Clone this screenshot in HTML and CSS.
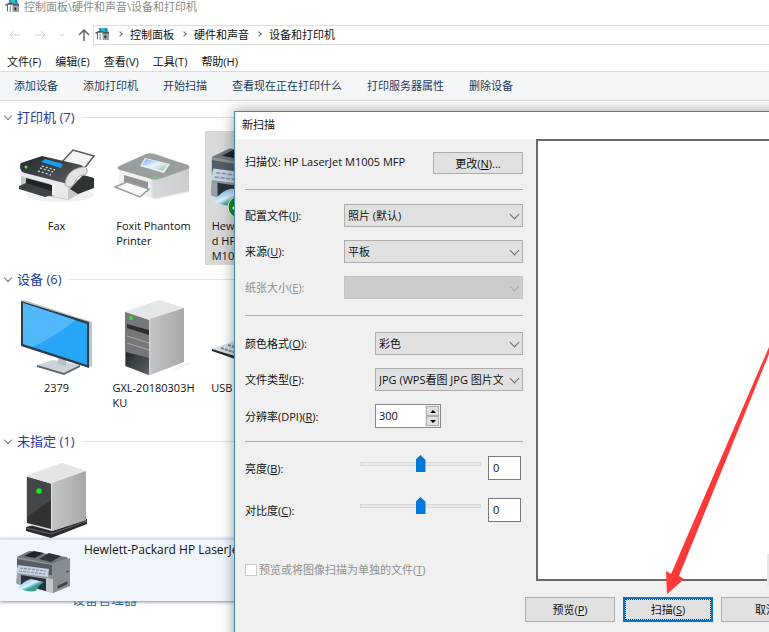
FILE: index.html
```html
<!DOCTYPE html>
<html lang="zh-CN">

<head>
    <meta charset="UTF-8">
    <meta name="viewport" content="width=device-width, initial-scale=1.0">
    <title>设备和打印机</title>
    <link rel="stylesheet" href="styles.css">
</head>

<body>
    <!-- shared drawings -->
    <svg class="defs" width="0" height="0">
        <defs>
            <linearGradient id="dark" x1="0" y1="0" x2="1" y2="1">
                <stop offset="0" stop-color="#24282b" />
                <stop offset="1" stop-color="#5c6267" />
            </linearGradient>
            <linearGradient id="side" x1="0" y1="0" x2="1" y2="0">
                <stop offset="0" stop-color="#c2c4c5" />
                <stop offset="1" stop-color="#a6a8aa" />
            </linearGradient>
            <linearGradient id="photo" x1="0" y1="0" x2="1" y2="1">
                <stop offset="0" stop-color="#3f9be8" />
                <stop offset="0.45" stop-color="#dff3ff" />
                <stop offset="0.6" stop-color="#3aa3a0" />
                <stop offset="1" stop-color="#4d9a4b" />
            </linearGradient>
            <linearGradient id="shot" x1="0" y1="0" x2="1" y2="1">
                <stop offset="0" stop-color="#6fa8e6" />
                <stop offset="0.5" stop-color="#eef6fb" />
                <stop offset="1" stop-color="#9ab8a4" />
            </linearGradient>
            <symbol id="small-device" viewBox="0 0 16 14">
                <path d="M4 0h9l1 4H5z" fill="#1583dc" />
                <path d="M6 0h4l1 3H7z" fill="#35d08a" />
                <path d="M0 5l4-2h4v2H3v7H2V6H0z" fill="#4b565f" />
                <path d="M5 6h1v7H5z" fill="#69737b" />
                <path d="M8 5h7v8H8z" fill="#9aa3a9" />
                <path d="M8 4h7v2H8z" fill="#4d565e" />
                <path d="M10 8h2v3h-2z" fill="#2b3339" />
            </symbol>
            <symbol id="laser" viewBox="0 0 56 44">
                <path d="M2 7l12-6 38 6 3 5v24l-17 7-36-9z" fill="#8d949a" />
                <path d="M2 7l13-6 38 7-16 6z" fill="#70777d" />
                <path d="M9 6l10-5 10 2-9 5z" fill="#202528" />
                <path d="M24 9l10-6 12 3-10 6z" fill="#2e3438" />
                <path d="M2 9l35 6v10L2 22z" fill="#555c62" />
                <path d="M37 15l18-7v27l-17 8z" fill="#868e94" />
                <path d="M3 15l31 4-1 8L1 23z" fill="#c6d3e1" />
                <path d="M5 18l26 3M4 21l26 3" stroke="#8497aa" stroke-width="1.2" stroke-dasharray="3 1" />
                <path d="M2 24l4 1v10l-5-2z" fill="#9aa1a6" />
                <path d="M6 25l25 4v12L6 34z" fill="#2b3136" />
                <path d="M3 38c4-5 8-8 13-9l13 3c-5 3-7 6-8 9-6 1-12 0-18-3z" fill="url(#photo)" />
                <path d="M31 28l7 1v14l-7-2z" fill="#c3c7ca" />
                <path d="M43 36l9-4v2l-9 4zM51 22l3-1" fill="#3d4348" stroke="#3d4348" />
            </symbol>
        </defs>
    </svg>

    <main class="explorer">
        <header class="caption">
            <svg class="small-icon"><use href="#small-device" /></svg>
            <span>控制面板\硬件和声音\设备和打印机</span>
        </header>

        <nav class="address">
            <div class="history">
                <svg width="12" height="10" viewBox="0 0 12 10"><path d="M11 5H1M5 1L1 5l4 4" stroke="#d0d0d0" fill="none" /></svg>
                <svg width="12" height="10" viewBox="0 0 12 10"><path d="M1 5h10M7 1l4 4-4 4" stroke="#d0d0d0" fill="none" /></svg>
                <svg width="6" height="4" viewBox="0 0 6 4"><path d="M1 1l2 2 2-2" stroke="#d0d0d0" fill="none" /></svg>
                <svg width="12" height="12" viewBox="0 0 12 12"><path d="M6 12V1M1 6l5-5 5 5" stroke="#666" stroke-width="1.5" fill="none" /></svg>
            </div>
            <div class="crumbs">
                <svg class="small-icon"><use href="#small-device" /></svg>
                <i class="crumb-sep"></i>
                <span>控制面板</span>
                <i class="crumb-sep"></i>
                <span>硬件和声音</span>
                <i class="crumb-sep"></i>
                <span>设备和打印机</span>
            </div>
        </nav>

        <nav class="menu">
            <span>文件(F)</span>
            <span>编辑(E)</span>
            <span>查看(V)</span>
            <span>工具(T)</span>
            <span>帮助(H)</span>
        </nav>

        <div class="toolbar">
            <button type="button">添加设备</button>
            <button type="button">添加打印机</button>
            <button type="button">开始扫描</button>
            <button type="button">查看现在正在打印什么</button>
            <button type="button">打印服务器属性</button>
            <button type="button">删除设备</button>
        </div>

        <section class="group">
            <h2><i class="fold"></i>打印机 (7)</h2>
            <div class="tiles">
                <div class="tile">
                    <svg class="device" viewBox="1 1 80 80">
                        <ellipse cx="44" cy="58" rx="34" ry="7" fill="#f1f1f1" />
                        <path d="M45 26l12-13 21 6-13 17z" fill="#f4f4f4" stroke="#555b60" stroke-width="1.5" />
                        <path d="M5 31l29 8v18l18 5V47l15-7v15l-15 8-17-3-30-8z" fill="#c5c8ca" />
                        <path d="M5 26l21-7 39 9c3 1 3 4 1 6L52 46c-4 2-8 1-13 0L8 36c-4-2-5-7-3-10z" fill="url(#dark)" />
                        <path d="M5 35l47 12v15l-13-2V48L5 39z" fill="#e8e9ea" />
                        <path d="M10 41l26 7v11l-26-6z" fill="#1f2427" />
                        <path d="M3 49l7-3 26 8v4l-7 2L3 52z" fill="#3c4246" />
                        <path d="M67 38l11 3v10l-16 6-8-5z" fill="#2e3336" />
                        <path d="M49 47c1-10 8-16 19-17 4 0 4 6 1 8-6 0-9 3-11 9-2 4-9 3-9 0z" fill="#e0e2e3" stroke="#aaa" />
                        <path d="M25 25l4-3 18 5-2 4z" fill="#189df0" />
                        <path d="M26 29l13 4m-15-2l13 4m-15-1l13 4" stroke="#c6cbcf" stroke-width="1.4" stroke-dasharray="2 2" />
                        <circle cx="10" cy="30" r="1.5" fill="#40ef4a" />
                    </svg>
                    <span class="name">Fax</span>
                </div>
                <div class="tile">
                    <svg class="device" viewBox="3 1 80 80">
                        <path d="M8 31l35-15 35 13v26L45 62 9 50z" fill="#e1e2e3" />
                        <path d="M8 29l27-12c3-1 5-1 8 0l34 11c2 1 2 3 0 4L49 42c-3 1-6 1-9 0L9 33c-3-1-3-3-1-4z" fill="#9b9e9f" />
                        <path d="M8 33l32 9v19l-6-2V48L13 42v7l-5 2z" fill="#f0f1f1" />
                        <path d="M13 38l24 7v10l-24-5z" fill="#909496" />
                        <path d="M4 50l12-5 22 7-9 8z" fill="#fafafa" stroke="#9b9e9f" stroke-width="1.5" />
                        <path d="M41 43l37-12v23L42 61z" fill="url(#side)" opacity=".35" />
                        <path d="M34 21l25 6-6 9-24-7z" fill="#e9f2f7" />
                        <path d="M35 22l22 5-5 7-21-6z" fill="url(#shot)" />
                        <circle cx="44" cy="40" r="1.2" fill="#4ce457" />
                    </svg>
                    <span class="name">Foxit Phantom<br>Printer</span>
                </div>
                <div class="tile selected">
                    <svg class="device" viewBox="0 0 80 80">
                        <use href="#laser" x="-2" y="9" width="80" height="63" />
                        <circle cx="28" cy="69" r="11" fill="#109310" stroke="#fff" />
                        <path d="M22 69l4 4 8-9" fill="none" stroke="#fff" stroke-width="3" />
                    </svg>
                    <span class="name">Hewlett-Packar<br>d HP LaserJet<br>M1005</span>
                </div>
            </div>
        </section>

        <section class="group">
            <h2><i class="fold"></i>设备 (6)</h2>
            <div class="tiles">
                <div class="tile">
                    <svg class="device" viewBox="1 0 80 80">
                        <path d="M21 65l16-5 27 5-16 9z" fill="#cad4da" />
                        <path d="M21 65l27 8 16-8v2l-16 8-27-8z" fill="#59636a" />
                        <path d="M42 57l8 2v7l-8-2z" fill="#b9c2c9" />
                        <path d="M5 1l3-1 68 22v44l-4 2z" fill="#bac4cc" />
                        <path d="M5 1l68 21v46L5 46z" fill="#2e3c46" />
                        <path d="M7 3l64 21v41L7 44z" fill="#27a6f8" />
                        <path d="M7 3l52 17c-12 11-26 19-42 27L7 44z" fill="#50b8fb" />
                    </svg>
                    <span class="name">2379</span>
                </div>
                <div class="tile">
                    <svg class="device" viewBox="1 0 80 80">
                        <path d="M66 65l9-3 6 1-24 9z" fill="#f4f4f4" />
                        <path d="M12 12L46 0l25 8v54L37 75l-25-9z" fill="#d8dadb" />
                        <path d="M12 12L46 0l25 8-35 12z" fill="#e4e6e8" />
                        <path d="M37 19l34-11v54L37 75z" fill="url(#side)" />
                        <path d="M12 12l24 8v55l-24-9z" fill="#77777b" />
                        <path d="M14 24l22 6v5l-22-7z" fill="#2e2f31" />
                        <path d="M14 36l22 7m-22 0l22 7" stroke="#aaa" />
                        <path d="M13 52l23 6v17l-23-9z" fill="url(#dark)" />
                        <circle cx="18" cy="18" r="2" fill="#35e332" />
                    </svg>
                    <span class="name">GXL-20180303H<br>KU</span>
                </div>
                <div class="tile">
                    <svg class="device" viewBox="0 0 80 80">
                        <path d="M1 49l22-8 44 14-20 11z" fill="#d7dcdf" />
                        <path d="M1 49l46 14v4L1 51z" fill="#222b31" />
                        <path d="M10 48l28 9m-21-12l28 9m-20-12l28 9" stroke="#7c878f" stroke-width="2" stroke-dasharray="3 1" />
                    </svg>
                    <span class="name">USB Keyboards</span>
                </div>
            </div>
        </section>

        <section class="group">
            <h2><i class="fold"></i>未指定 (1)</h2>
            <div class="tiles">
                <div class="tile">
                    <svg class="device" viewBox="1 0 80 80">
                        <path d="M10 65l34-9 27 1v5L35 76 10 69z" fill="#2a2a2c" />
                        <path d="M10 66l25 6 36-13" stroke="#666" fill="none" />
                        <path d="M10 14L46 1l24 8v49L36 69l-26-7z" fill="#dedfe1" />
                        <path d="M10 14L46 1l24 8-34 12z" fill="#e4e5e7" />
                        <path d="M36 21l34-12v49L36 69z" fill="url(#side)" />
                        <path d="M11 15l24 7v45l-24-6z" fill="#303234" />
                        <path d="M11 15l24 7v16L11 55z" fill="#444648" />
                        <circle cx="23" cy="29" r="2.8" fill="#16e51c" />
                    </svg>
                </div>
            </div>
        </section>

        <a class="related" href="#">设备管理器</a>
    </main>

    <footer class="details">
        <svg width="56" height="44"><use href="#laser" /></svg>
        <span>Hewlett-Packard HP LaserJet M1005</span>
    </footer>

    <form class="dialog">
        <h1>新扫描</h1>
        <div class="dialog-body">
            <div class="settings">
                <div class="scanner">
                    <span>扫描仪: HP LaserJet M1005 MFP</span>
                    <button type="button">更改(<u>N</u>)...</button>
                </div>

                <div class="fields">
                    <label for="profile">配置文件(<u>I</u>):</label>
                    <div class="select"><select id="profile"><option>照片 (默认)</option></select></div>
                    <label for="source">来源(<u>U</u>):</label>
                    <div class="select"><select id="source"><option>平板</option></select></div>
                    <label class="off" for="paper">纸张大小(<u>E</u>):</label>
                    <div class="select"><select id="paper" disabled><option></option></select></div>
                </div>

                <div class="fields narrow">
                    <label for="color">颜色格式(<u>O</u>):</label>
                    <div class="select"><select id="color"><option>彩色</option></select></div>
                    <label for="type">文件类型(<u>F</u>):</label>
                    <div class="select"><select id="type"><option>JPG (WPS看图 JPG 图片文件)</option></select></div>
                    <label for="dpi">分辨率(DPI)(<u>R</u>):</label>
                    <div class="spinner">
                        <input type="number" id="dpi" value="300">
                        <div class="steps">
                            <button type="button" class="up" aria-label="增加"></button>
                            <button type="button" class="down" aria-label="减少"></button>
                        </div>
                    </div>
                </div>

                <div class="levels">
                    <label for="brightness">亮度(<u>B</u>):</label>
                    <input type="range" id="brightness" min="-100" max="100" value="0">
                    <input type="text" value="0" aria-label="亮度">
                    <label for="contrast">对比度(<u>C</u>):</label>
                    <input type="range" id="contrast" min="-100" max="100" value="0">
                    <input type="text" value="0" aria-label="对比度">
                </div>

                <label class="separate off"><input type="checkbox" disabled>预览或将图像扫描为单独的文件(<u>T</u>)</label>
            </div>
            <div class="preview"></div>
        </div>
        <div class="actions">
            <button type="button">预览(<u>P</u>)</button>
            <button type="submit" class="default">扫描(<u>S</u>)</button>
            <button type="button">取消</button>
        </div>
    </form>

    <svg class="pointer" width="129" height="270" viewBox="0 0 129 270">
        <path d="M27 264l-1-23 5 3L129 17v7L39 246l5 3z" fill="#ff3838" />
    </svg>
    <div class="edge"></div>
</body>

</html>
```

FILE: styles.css
```css
* {
    box-sizing: border-box;
}

body {
    position: relative;
    margin: 0;
    height: 100vh;
    overflow: hidden;
    background: #fff;
    color: #111;
    font: 11px/15px "Open Sans", "Noto Sans CJK SC", sans-serif;
}

button,
input,
select {
    margin: 0;
    color: inherit;
    font: inherit;
}

.defs {
    position: absolute;
}

.small-icon {
    flex: none;
    width: 15px;
    height: 13px;
}

/* explorer window */
.caption {
    display: flex;
    align-items: center;
    gap: 4px;
    height: 25px;
    padding: 0 5px 12px;
    color: #8c8c8c;
}

.address {
    display: flex;
    height: 20px;
}

.history {
    display: flex;
    flex: none;
    align-items: center;
    gap: 13px;
    width: 93px;
    padding-left: 9px;
}

.crumbs {
    display: flex;
    flex: 1;
    align-items: center;
    gap: 8px;
    padding: 0 0 2px 1px;
    border: 1px solid #dedede;
    border-right: 0;
}

.crumb-sep {
    width: 4px;
    height: 4px;
    border: solid #666;
    border-width: 1px 1px 0 0;
    transform: rotate(45deg);
}

.menu {
    display: flex;
    gap: 14px;
    height: 26px;
    padding: 9px 7px 0;
}

.toolbar {
    display: flex;
    gap: 25px;
    height: 30px;
    padding: 0 14px 2px;
    border: solid #dadcdf;
    border-width: 1px 0;
    background: #f5f6f7;
    white-space: nowrap;
}

.toolbar button {
    padding: 0;
    border: 0;
    background: none;
    color: #1e395b;
}

.group {
    height: 162px;
    padding-top: 4px;
}

.group h2 {
    display: flex;
    align-items: center;
    gap: 5px;
    height: 24px;
    margin: 0 0 2px;
    padding-left: 4px;
    color: #27389a;
    font-size: 13px;
    font-weight: normal;
}

.group h2::after {
    content: "";
    flex: 1;
    height: 1px;
    margin-left: 3px;
    background: #e2e2e2;
}

.fold {
    width: 6px;
    height: 6px;
    margin: -3px 1px 0;
    border: solid #777;
    border-width: 0 1px 1px 0;
    transform: rotate(45deg);
}

.tiles {
    display: flex;
    gap: 6px;
    padding-left: 11px;
}

.tile {
    display: flex;
    flex-direction: column;
    align-items: center;
    width: 91px;
    height: 134px;
    padding-top: 7px;
}

.tile.selected {
    background: #d9d9d9;
}

.device {
    flex: none;
    width: 80px;
    height: 80px;
}

.name {
    white-space: nowrap;
}

.related {
    display: block;
    margin-left: 72px;
    padding-top: 5px;
    color: #1767a5;
    font-size: 13px;
    text-decoration: none;
}

.details {
    position: absolute;
    right: 0;
    bottom: 31px;
    left: 0;
    display: flex;
    gap: 13px;
    height: 63px;
    padding: 2px 15px;
    border-top: 2px solid #d6e1f1;
    background: #f1f5fc;
    box-shadow: 0 1px 3px #888;
    font-size: 12px;
}

.details svg {
    margin-top: 8px;
}

/* scan dialog */
.dialog {
    position: absolute;
    top: 111px;
    right: -120px;
    bottom: -20px;
    left: 234px;
    border: 1px solid #3c87c4;
    background: #f0f0f0;
    box-shadow: 0 0 14px rgba(0, 0, 0, 0.4);
}

.dialog h1 {
    height: 27px;
    margin: 0;
    padding: 5px 7px;
    background: #fff;
    font-size: 11px;
    font-weight: normal;
}

.dialog-body {
    display: flex;
    gap: 13px;
    padding-left: 10px;
}

.settings {
    flex: none;
    width: 278px;
}

.dialog button {
    width: 90px;
    height: 22px;
    padding: 0;
    border: 1px solid #adadad;
    background: #e1e1e1;
}

.scanner {
    display: flex;
    justify-content: space-between;
    height: 51px;
    padding-top: 13px;
    border-bottom: 1px solid #adadad;
    white-space: nowrap;
}

.scanner span {
    padding-top: 2px;
}

.fields {
    display: grid;
    grid-template-columns: 99px 1fr;
    align-items: center;
    row-gap: 13px;
    padding: 14px 0 16px;
    border-bottom: 1px solid #adadad;
}

.fields.narrow {
    grid-template-columns: 130px 1fr;
    padding: 16px 0 13px;
}

.off {
    color: #8f8f8f;
}

.select {
    position: relative;
    min-width: 0;
}

.select::after {
    content: "";
    position: absolute;
    top: 7px;
    right: 5px;
    width: 6px;
    height: 6px;
    border: solid #666;
    border-width: 0 1px 1px 0;
    transform: rotate(45deg);
    pointer-events: none;
}

.select select {
    display: block;
    appearance: none;
    width: 100%;
    height: 23px;
    padding: 0 19px 0 3px;
    border: 1px solid #adadad;
    border-radius: 0;
    background: #e1e1e1;
}

.select select:disabled {
    border-color: #c4c4c4;
    background: #ccc;
    opacity: 1;
}

.select:has(:disabled)::after {
    border-color: #aaa;
}

.spinner {
    display: flex;
    width: 66px;
    height: 24px;
    border: 1px solid #8a8a8a;
    background: #fff;
}

.spinner input {
    appearance: textfield;
    width: 49px;
    padding: 0 3px 2px;
    border: 0;
    outline: 0;
}

.spinner input::-webkit-inner-spin-button {
    display: none;
}

.steps {
    display: flex;
    flex: 1;
    flex-direction: column;
    padding: 1px;
    background: #f0f0f0;
}

.steps button {
    display: flex;
    align-items: center;
    justify-content: center;
    width: 100%;
    height: 10px;
}

.steps button::before {
    content: "";
    border: 3px solid transparent;
}

.steps .up::before {
    border-top: 0;
    border-bottom-color: #000;
}

.steps .down::before {
    border-bottom: 0;
    border-top-color: #000;
}

.levels {
    display: grid;
    grid-template-columns: 115px 121px 33px;
    align-items: center;
    row-gap: 18px;
    padding-top: 14px;
}

.levels input[type="text"] {
    width: 33px;
    height: 24px;
    margin-left: 7px;
    padding: 0 4px 2px;
    border: 1px solid #7a7a7a;
    background: #fff;
}

.levels input[type="range"] {
    appearance: none;
    width: 121px;
    height: 16px;
    margin-bottom: 8px;
    background: none;
}

.levels input::-webkit-slider-runnable-track {
    height: 4px;
    border: 1px solid #d4d8d8;
    background: #e8eaea;
}

.levels input::-webkit-slider-thumb {
    appearance: none;
    width: 10px;
    height: 17px;
    margin-top: -8px;
    background: #0078d7;
    clip-path: polygon(50% 0, 100% 28%, 100% 100%, 0 100%, 0 28%);
}

.separate {
    display: flex;
    align-items: center;
    margin-top: 40px;
    white-space: nowrap;
}

.separate input {
    appearance: none;
    width: 12px;
    height: 12px;
    margin-right: 2px;
    border: 1px solid #ccc;
    background: #fff;
}

.preview {
    flex: 1;
    height: 442px;
    border: 2px solid #696969;
    background: #fff;
}

.actions {
    display: flex;
    gap: 8px;
    padding: 16px 0 0 290px;
}

.actions button {
    height: 25px;
}

.actions .default {
    border: 2px solid #0078d7;
    outline: 1px dotted #222;
    outline-offset: -3px;
}

.pointer {
    position: absolute;
    top: 330px;
    left: 640px;
}

.edge {
    position: absolute;
    top: 554px;
    right: 0;
    width: 2px;
    height: 32px;
    background: #e6e6e6;
}
```
